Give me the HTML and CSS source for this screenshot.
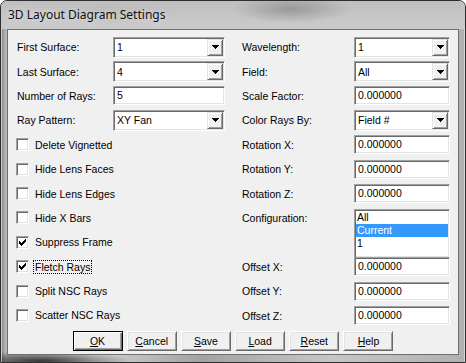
FILE: index.html
```html
<!DOCTYPE html>
<html lang="en">
<head>
    <meta charset="UTF-8">
    <title>3D Layout Diagram Settings</title>
    <link rel="stylesheet" href="styles.css">
</head>
<body>

<div class="window">
    <div class="titlebar">3D Layout Diagram Settings</div>
    <div class="client">
        <div class="form">
            <div class="col col-l">
                <div class="row"><span class="lbl">First Surface:</span>
                    <div class="field combo"><span>1</span><i class="drop"><svg width="7" height="4" viewBox="0 0 7 4"><path d="M0 0h7v1H0zM1 1h5v1H1zM2 2h3v1H2zM3 3h1v1H3z"/></svg></i></div></div>
                <div class="row"><span class="lbl">Last Surface:</span>
                    <div class="field combo"><span>4</span><i class="drop"><svg width="7" height="4" viewBox="0 0 7 4"><path d="M0 0h7v1H0zM1 1h5v1H1zM2 2h3v1H2zM3 3h1v1H3z"/></svg></i></div></div>
                <div class="row"><span class="lbl">Number of Rays:</span>
                    <div class="field input">5</div></div>
                <div class="row"><span class="lbl">Ray Pattern:</span>
                    <div class="field combo"><span>XY Fan</span><i class="drop"><svg width="7" height="4" viewBox="0 0 7 4"><path d="M0 0h7v1H0zM1 1h5v1H1zM2 2h3v1H2zM3 3h1v1H3z"/></svg></i></div></div>

                <div class="row"><i class="check"></i><span class="cb-label">Delete Vignetted</span></div>
                <div class="row"><i class="check"></i><span class="cb-label">Hide Lens Faces</span></div>
                <div class="row"><i class="check"></i><span class="cb-label">Hide Lens Edges</span></div>
                <div class="row"><i class="check"></i><span class="cb-label">Hide X Bars</span></div>
                <div class="row"><i class="check"><svg width="7" height="7" viewBox="0 0 7 7"><path d="M6 0h1v1H6zM5 1h2v1H5zM0 2h1v1H0zM4 2h3v1H4zM0 3h2v1H0zM3 3h3v1H3zM0 4h5v1H0zM1 5h3v1H1zM2 6h1v1H2z"/></svg></i><span class="cb-label">Suppress Frame</span></div>
                <div class="row"><i class="check"><svg width="7" height="7" viewBox="0 0 7 7"><path d="M6 0h1v1H6zM5 1h2v1H5zM0 2h1v1H0zM4 2h3v1H4zM0 3h2v1H0zM3 3h3v1H3zM0 4h5v1H0zM1 5h3v1H1zM2 6h1v1H2z"/></svg></i><span class="cb-label focus">Fletch Rays</span></div>
                <div class="row"><i class="check"></i><span class="cb-label">Split NSC Rays</span></div>
                <div class="row"><i class="check"></i><span class="cb-label">Scatter NSC Rays</span></div>
            </div>

            <div class="col col-r">
                <div class="row"><span class="lbl">Wavelength:</span>
                    <div class="field combo"><span>1</span><i class="drop"><svg width="7" height="4" viewBox="0 0 7 4"><path d="M0 0h7v1H0zM1 1h5v1H1zM2 2h3v1H2zM3 3h1v1H3z"/></svg></i></div></div>
                <div class="row"><span class="lbl">Field:</span>
                    <div class="field combo"><span>All</span><i class="drop"><svg width="7" height="4" viewBox="0 0 7 4"><path d="M0 0h7v1H0zM1 1h5v1H1zM2 2h3v1H2zM3 3h1v1H3z"/></svg></i></div></div>
                <div class="row"><span class="lbl">Scale Factor:</span>
                    <div class="field input">0.000000</div></div>
                <div class="row"><span class="lbl">Color Rays By:</span>
                    <div class="field combo"><span>Field #</span><i class="drop"><svg width="7" height="4" viewBox="0 0 7 4"><path d="M0 0h7v1H0zM1 1h5v1H1zM2 2h3v1H2zM3 3h1v1H3z"/></svg></i></div></div>
                <div class="row"><span class="lbl">Rotation X:</span>
                    <div class="field input">0.000000</div></div>
                <div class="row"><span class="lbl">Rotation Y:</span>
                    <div class="field input">0.000000</div></div>
                <div class="row"><span class="lbl">Rotation Z:</span>
                    <div class="field input">0.000000</div></div>
                <div class="row row-tall"><span class="lbl">Configuration:</span>
                    <div class="field list">
                        <div class="item">All</div>
                        <div class="item selected">Current</div>
                        <div class="item">1</div>
                    </div></div>
                <div class="row"><span class="lbl">Offset X:</span>
                    <div class="field input">0.000000</div></div>
                <div class="row"><span class="lbl">Offset Y:</span>
                    <div class="field input">0.000000</div></div>
                <div class="row"><span class="lbl">Offset Z:</span>
                    <div class="field input">0.000000</div></div>
            </div>
        </div>

        <div class="buttons">
            <button class="btn default"><u>O</u>K</button>
            <button class="btn"><u>C</u>ancel</button>
            <button class="btn"><u>S</u>ave</button>
            <button class="btn"><u>L</u>oad</button>
            <button class="btn"><u>R</u>eset</button>
            <button class="btn"><u>H</u>elp</button>
        </div>
    </div>
</div>

</body>
</html>
```

FILE: styles.css
```css
* {
    box-sizing: border-box;
}
body {
    margin: 0;
    font-family: "Liberation Sans", Arial, sans-serif;
    font-size: 10.5px;
    color: #000;
    background: #fff;
}
.window {
    width: 466px;
    height: 363px;
    border: 1px solid #2e2e2e;
    border-radius: 7px 7px 0 0;
    padding: 0 6px 7px;
    display: flex;
    flex-direction: column;
    background:
        radial-gradient(ellipse 90px 10px at 40px 360px, rgba(20, 20, 20, 0.8), transparent),
        radial-gradient(ellipse 70px 16px at 300px 9px, rgba(100, 100, 100, 0.5), transparent),
        linear-gradient(90deg, #7a7a7a 0, #b4b4b4 4px, #d4d4d4 90px, #a2a2a2 200px, #c6c6c6 330px, #b0b0b0 466px);
    box-shadow: inset 1px 1px rgba(255, 255, 255, 0.6), inset -1px 0 rgba(255, 255, 255, 0.5);
}
.titlebar {
    height: 28px;
    margin: 0 -6px;
    padding: 6px 0 0 7px;
    font-family: "Noto Sans", sans-serif;
    font-size: 12px;
    line-height: 16px;
    color: #111;
    border-radius: 6px 6px 0 0;
    background:
        radial-gradient(ellipse 60px 14px at 290px 8px, rgba(120, 120, 120, 0.55), transparent),
        radial-gradient(ellipse 70px 10px at 110px 12px, rgba(150, 150, 150, 0.3), transparent),
        linear-gradient(#bfbfbf, #cbcbcb);
    text-shadow: 0 0 6px rgba(255, 255, 255, 0.9);
}
.client {
    flex: 1;
    background: #f0f0f0;
    border: 1px solid #6f6f6f;
    display: flex;
    flex-direction: column;
}
.form {
    display: flex;
    gap: 17px;
    padding: 5px 0 0 8px;
}
.col-l {
    width: 209px;
}
.col-r {
    width: 208px;
}
.row {
    height: 24.4px;
    display: flex;
    align-items: center;
    white-space: nowrap;
}
.row-tall {
    height: 48.8px;
    align-items: flex-start;
}
.row-tall .lbl {
    line-height: 24.4px;
}
.col-l .lbl {
    width: 97px;
    padding-left: 1px;
}
.col-r .lbl {
    width: 112px;
}
.col-l .field {
    width: 112px;
}
.col-r .field {
    width: 96px;
}
.combo, .input, .list, .check {
    background: #fff;
    border: 1px solid;
    border-color: #a0a0a0 #fff #fff #a0a0a0;
    box-shadow: inset 1px 1px #696969, inset -1px -1px #e3e3e3;
}
.combo {
    height: 21px;
    display: flex;
    align-items: center;
    padding: 1px;
}
.combo span {
    flex: 1;
    padding-left: 2px;
}
.drop {
    width: 16px;
    height: 17px;
    background: #f0f0f0;
    border: 1px solid;
    border-color: #e3e3e3 #696969 #696969 #e3e3e3;
    box-shadow: inset 1px 1px #fff, inset -1px -1px #a0a0a0;
    display: flex;
    align-items: center;
    justify-content: center;
}
.drop svg {
    display: block;
    margin-left: 1px;
}
.input {
    height: 19px;
    padding: 0 3px;
    line-height: 17px;
}
.list {
    height: 49px;
    margin-top: 3.2px;
    padding: 1px;
}
.item {
    height: 13px;
    line-height: 13px;
    padding-left: 1px;
}
.selected {
    background: #3399ff;
    color: #fff;
}
.check {
    width: 13px;
    height: 13px;
    display: flex;
    align-items: center;
    justify-content: center;
}
.check svg {
    display: block;
}
.cb-label {
    margin-left: 4px;
    padding: 0 1px;
    border: 1px dotted transparent;
    line-height: 12px;
}
.focus {
    border-color: #000;
}
.buttons {
    display: flex;
    justify-content: center;
    gap: 4.2px;
    margin-top: 3.2px;
}
.btn {
    width: 50px;
    height: 20px;
    padding: 0;
    font-family: inherit;
    font-size: 10.5px;
    color: #000;
    background: #f0f0f0;
    border: 1px solid;
    border-color: #fff #696969 #696969 #fff;
    box-shadow: inset 1px 1px #e3e3e3, inset -1px -1px #a0a0a0;
}
.btn.default {
    border-color: #000;
    box-shadow: inset 1px 1px #fff, inset -1px -1px #696969, inset -2px -2px #a0a0a0;
}
```
